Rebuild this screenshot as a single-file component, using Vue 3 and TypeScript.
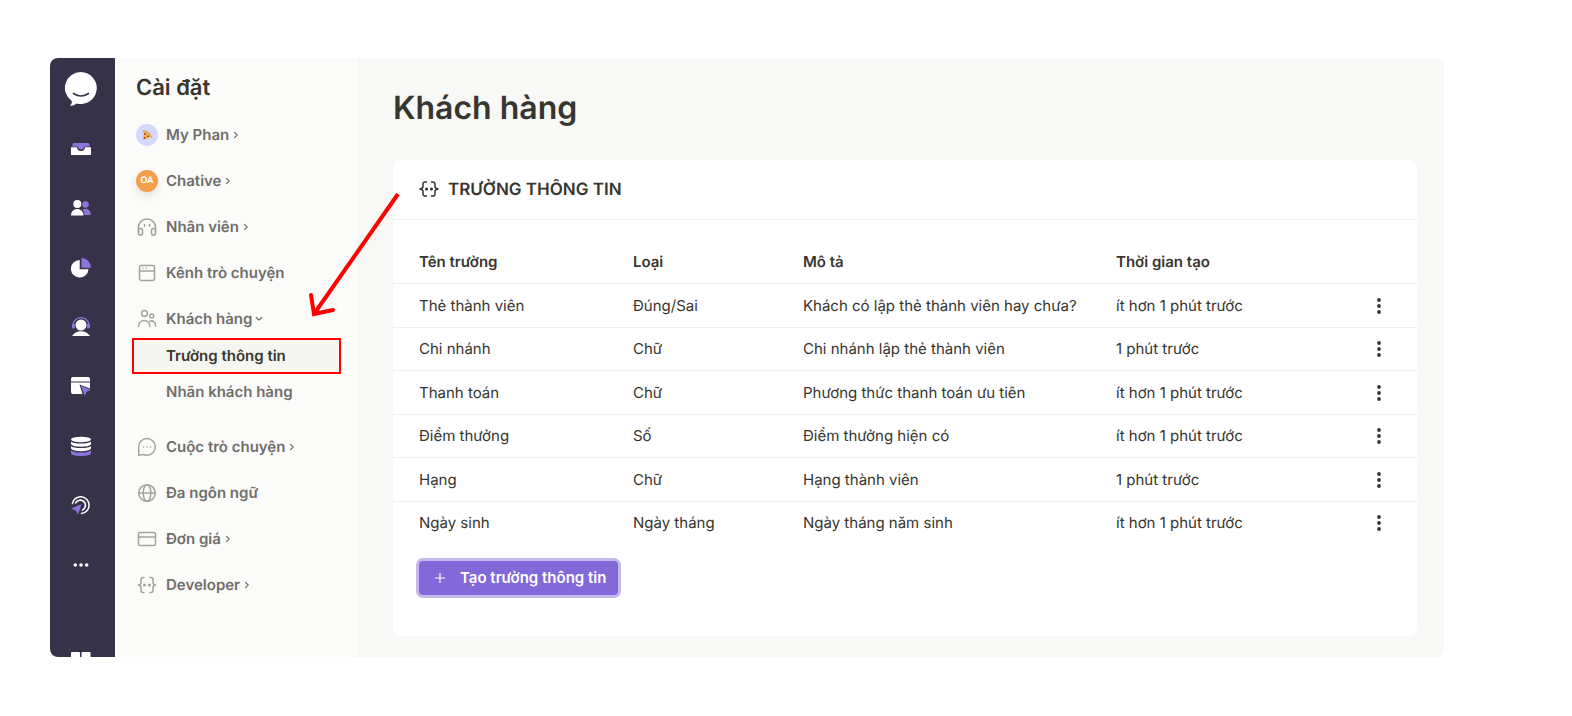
<script setup lang="ts">
import { ref } from 'vue'

interface NavItem {
  id: string
  label: string
  chevron?: 'right' | 'down'
  children?: string[]
}

interface Field {
  name: string
  type: string
  description: string
  created: string
}

const railItems: { id: string; label: string }[] = [
  { id: 'inbox', label: 'Hộp thư' },
  { id: 'contacts', label: 'Danh bạ' },
  { id: 'reports', label: 'Báo cáo' },
  { id: 'agents', label: 'Tổng đài' },
  { id: 'widget', label: 'Tiện ích' },
  { id: 'data', label: 'Dữ liệu' },
  { id: 'campaign', label: 'Chiến dịch' },
  { id: 'more', label: 'Thêm' },
  { id: 'apps', label: 'Ứng dụng' },
]

const navItems: NavItem[] = [
  { id: 'profile', label: 'My Phan', chevron: 'right' },
  { id: 'org', label: 'Chative', chevron: 'right' },
  { id: 'staff', label: 'Nhân viên', chevron: 'right' },
  { id: 'channel', label: 'Kênh trò chuyện' },
  {
    id: 'customer',
    label: 'Khách hàng',
    chevron: 'down',
    children: ['Trường thông tin', 'Nhãn khách hàng'],
  },
  { id: 'chat', label: 'Cuộc trò chuyện', chevron: 'right' },
  { id: 'language', label: 'Đa ngôn ngữ' },
  { id: 'billing', label: 'Đơn giá', chevron: 'right' },
  { id: 'developer', label: 'Developer', chevron: 'right' },
]

const activeChild = ref('Trường thông tin')

const fields: Field[] = [
  { name: 'Thẻ thành viên', type: 'Đúng/Sai', description: 'Khách có lập thẻ thành viên hay chưa?', created: 'ít hơn 1 phút trước' },
  { name: 'Chi nhánh', type: 'Chữ', description: 'Chi nhánh lập thẻ thành viên', created: '1 phút trước' },
  { name: 'Thanh toán', type: 'Chữ', description: 'Phương thức thanh toán ưu tiên', created: 'ít hơn 1 phút trước' },
  { name: 'Điểm thưởng', type: 'Số', description: 'Điểm thưởng hiện có', created: 'ít hơn 1 phút trước' },
  { name: 'Hạng', type: 'Chữ', description: 'Hạng thành viên', created: '1 phút trước' },
  { name: 'Ngày sinh', type: 'Ngày tháng', description: 'Ngày tháng năm sinh', created: 'ít hơn 1 phút trước' },
]
</script>

<template>
  <div class="page">
    <div class="app">
      <nav class="rail" aria-label="Chính">
        <a class="logo" href="#" aria-label="Trang chủ">
          <svg width="34" height="36" viewBox="0 0 34 36">
            <path d="M17 1a16 16 0 1 1-4.600 31.400C10.500 34 8.500 34.800 6 34.600C7.500 33.300 8 31.800 7.700 30.100A16 16 0 0 1 17 1z" fill="#fff" />
            <path d="M9.500 22.500Q17 27.500 24.500 22.500" fill="none" stroke="#36324a" stroke-width="1.700" stroke-linecap="round" />
          </svg>
        </a>
        <a v-for="item in railItems" :key="item.id" class="rail-item" href="#" :aria-label="item.label">
          <svg width="20" height="20" viewBox="0 0 20 20">
            <template v-if="item.id === 'inbox'">
              <path d="M3 4h14q1 0 1.300 1l.7 2.500H13.500Q13 10.500 10 10.500T6.500 7.500H1L1.700 5Q2 4 3 4z" fill="#8c74dc" />
              <path d="M0 8.300h6a4 3.600 0 0 0 8 0H20v7.200a.5.5 0 0 1-.5.5H.5a.5.5 0 0 1-.5-.5z" fill="#fff" />
            </template>
            <template v-else-if="item.id === 'contacts'">
              <circle cx="14.500" cy="6.500" r="3.300" fill="#8c74dc" />
              <path d="M11.500 11.500C16.500 9.600 19.700 12.200 19.700 17H13.500Q13.500 13.500 11.500 11.500z" fill="#8c74dc" />
              <circle cx="6.300" cy="6" r="4" fill="#fff" />
              <path d="M0 17.500C0 8.800 12.500 8.800 12.500 17.500z" fill="#fff" />
            </template>
            <template v-else-if="item.id === 'reports'">
              <path d="M8.700 2A8.800 8.800 0 1 0 17.500 11.300H8.700z" fill="#fff" />
              <path d="M10.500 0A9.300 9.300 0 0 1 19.800 9.700H10.500z" fill="#8c74dc" />
            </template>
            <template v-else-if="item.id === 'agents'">
              <path d="M2.200 7.500a7.800 6.800 0 0 1 15.600 0" fill="none" stroke="#8c74dc" stroke-width="1.300" />
              <rect x="1" y="6.500" width="3" height="5" rx="1.500" fill="#8c74dc" />
              <rect x="16" y="6.500" width="3" height="5" rx="1.500" fill="#8c74dc" />
              <circle cx="10" cy="8" r="5.500" fill="#fff" />
              <path d="M1 19Q4 14.300 10 14.300T19 19z" fill="#fff" />
            </template>
            <template v-else-if="item.id === 'widget'">
              <path d="M0 5.500V3a2 2 0 0 1 2-2h15a2 2 0 0 1 2 2v2.500z" fill="#fff" />
              <path d="M0 6.500h19v6L8.500 8.500l3 9.500H2a2 2 0 0 1-2-2z" fill="#fff" />
              <path d="M9.800 9.800l10 4.300-4.200 1.600L13.800 20z" fill="#8c74dc" />
            </template>
            <template v-else-if="item.id === 'data'">
              <path d="M0 14v3q0 3 10 3t10-3v-3q-2 2.600-10 2.600T0 14z" fill="#8c74dc" />
              <ellipse cx="10" cy="3.500" rx="10" ry="2.700" fill="#fff" />
              <path d="M0 5.500Q2 7.600 10 7.600T20 5.500V8.300Q18 10.800 10 10.800T0 8.300z" fill="#fff" />
              <path d="M0 10Q2 12 10 12T20 10V12.500Q18 15.200 10 15.200T0 12.500z" fill="#fff" />
            </template>
            <template v-else-if="item.id === 'campaign'">
              <path d="M1.400 8.600A8.400 8.400 0 1 1 10.500 18.500" fill="none" stroke="#fff" stroke-width="1.500" stroke-linecap="round" />
              <path d="M4.600 8A5.200 5.200 0 1 1 11.500 15" fill="none" stroke="#fff" stroke-width="1.600" stroke-linecap="round" />
              <path d="M10.500 9.300L7 19.500 4.700 15.500 0 13.500z" fill="#8c74dc" />
            </template>
            <template v-else-if="item.id === 'more'">
              <circle cx="4.300" cy="11" r="1.800" fill="#fff" />
              <circle cx="10" cy="11" r="1.800" fill="#fff" />
              <circle cx="15.700" cy="11" r="1.800" fill="#fff" />
            </template>
            <template v-else>
              <rect x="0" y="0" width="9" height="9" rx="1" fill="#fff" />
              <rect x="10.500" y="0" width="9" height="9" rx="1" fill="#fff" />
              <rect x="0" y="10.500" width="9" height="9" rx="1" fill="#fff" />
              <rect x="10.500" y="10.500" width="9" height="9" rx="1" fill="#fff" />
            </template>
          </svg>
        </a>
      </nav>

      <aside class="sidebar">
        <h2 class="sidebar-title">Cài đặt</h2>
        <ul class="nav">
          <li v-for="item in navItems" :key="item.id">
            <a class="nav-link" href="#">
              <span v-if="item.id === 'profile'" class="avatar avatar-pizza">
                <svg width="12" height="12" viewBox="0 0 12 12">
                  <path d="M2.500 2.500L10.500 8 2 11z" fill="#f5c04a" />
                  <path d="M2 1Q9 1.500 11.500 8.500L10 9Q7.500 4 1.700 3z" fill="#e5a65c" />
                  <circle cx="4" cy="5" r="1.100" fill="#c4372f" />
                  <circle cx="7" cy="7.200" r="1" fill="#c4372f" />
                  <circle cx="3.600" cy="9" r="1" fill="#c4372f" />
                </svg>
              </span>
              <span v-else-if="item.id === 'org'" class="avatar avatar-org">OA</span>
              <svg v-else class="nav-icon" width="22" height="22" viewBox="0 0 22 22">
                <template v-if="item.id === 'staff'">
                  <path d="M2.500 16V11a8.500 8 0 0 1 17 0V16" />
                  <rect x="2.500" y="12.500" width="4" height="6.500" rx="1.800" />
                  <rect x="15.500" y="12.500" width="4" height="6.500" rx="1.800" />
                  <path d="M8.500 8.500v1.800M13.500 8.500v1.800" />
                </template>
                <template v-else-if="item.id === 'channel'">
                  <rect x="3.500" y="3.500" width="15" height="15" rx="2" />
                  <path d="M3.500 9h15M6.800 6.300h.1M10.300 6.300h.1" />
                </template>
                <template v-else-if="item.id === 'customer'">
                  <circle cx="8.500" cy="5.500" r="2.900" />
                  <circle cx="15.700" cy="8" r="2" />
                  <path d="M2.800 18.500V17.500a5.500 5 0 0 1 11 0V18.500M14 13.200a4 4 0 0 1 5.500 4v1" />
                </template>
                <template v-else-if="item.id === 'chat'">
                  <path d="M2.700 19.200V11A8.300 8.300 0 1 1 11 19.200Q8.500 19.200 6.800 18.300Q5 19.200 2.700 19.200z" />
                  <path d="M7.500 11h.1M11 11h.1M14.500 11h.1" />
                </template>
                <template v-else-if="item.id === 'language'">
                  <circle cx="11" cy="11" r="8.300" />
                  <ellipse cx="11" cy="11" rx="3.800" ry="8.300" />
                  <path d="M2.700 11h16.600" />
                </template>
                <template v-else-if="item.id === 'billing'">
                  <rect x="2.500" y="4.500" width="17" height="13" rx="1.500" />
                  <path d="M2.500 9h17" />
                </template>
                <template v-else>
                  <path d="M8 3.500H7A2 2 0 0 0 5 5.500V8.500Q5 10.500 2.500 11Q5 11.500 5 13.500V16.500A2 2 0 0 0 7 18.500H8M14 3.500h1a2 2 0 0 1 2 2v3Q17 10.500 19.500 11Q17 11.500 17 13.500v3a2 2 0 0 1-2 2H14" />
                  <path class="thick" d="M8.500 11h.1M13.400 11h.1" />
                </template>
              </svg>
              <span>{{ item.label }}</span>
              <svg v-if="item.chevron" class="chevron" :class="item.chevron" width="8" height="8" viewBox="0 0 8 8">
                <path d="M2.500 1.300l2.700 2.700-2.700 2.700" />
              </svg>
            </a>
            <ul v-if="item.children" class="subnav">
              <li v-for="child in item.children" :key="child">
                <a class="sub-link" :class="{ active: child === activeChild }" href="#" @click.prevent="activeChild = child">{{ child }}</a>
              </li>
            </ul>
          </li>
        </ul>
      </aside>

      <main class="main">
        <h1 class="title">Khách hàng</h1>
        <section class="card">
          <header class="card-head">
            <svg class="head-icon" width="22" height="22" viewBox="0 0 22 22">
              <path d="M8.500 3H7.500A2 2 0 0 0 5 5V7.500Q5 9.500 2 10Q5 10.500 5 12.500V15A2 2 0 0 0 7.500 17H8.500M13.500 3h1a2 2 0 0 1 2.500 2v2.500Q17 9.500 20 10Q17 10.500 17 12.500V15a2 2 0 0 1-2.500 2H13.500" />
              <path class="thick" d="M8.500 10h.1M13.400 10h.1" />
            </svg>
            <h3>TRƯỜNG THÔNG TIN</h3>
          </header>
          <table class="fields">
            <thead>
              <tr>
                <th class="col-name">Tên trường</th>
                <th class="col-type">Loại</th>
                <th class="col-desc">Mô tả</th>
                <th>Thời gian tạo</th>
                <th class="col-menu"></th>
              </tr>
            </thead>
            <tbody>
              <tr v-for="field in fields" :key="field.name">
                <td>{{ field.name }}</td>
                <td>{{ field.type }}</td>
                <td>{{ field.description }}</td>
                <td>{{ field.created }}</td>
                <td>
                  <button class="menu" type="button" aria-label="Tùy chọn">
                    <svg width="6" height="18" viewBox="0 0 6 18">
                      <circle cx="3" cy="3" r="1.900" />
                      <circle cx="3" cy="9" r="1.900" />
                      <circle cx="3" cy="15" r="1.900" />
                    </svg>
                  </button>
                </td>
              </tr>
            </tbody>
          </table>
          <button class="create" type="button">
            <svg width="12" height="12" viewBox="0 0 12 12"><path d="M6 1v10M1 6h10" /></svg>
            Tạo trường thông tin
          </button>
        </section>
      </main>

      <svg class="arrow" width="96" height="132" viewBox="0 0 96 132" aria-hidden="true">
        <path d="M92 5L8 125" stroke-linecap="butt" />
        <path d="M5 106L8 125L27 121" stroke-linecap="round" />
      </svg>
    </div>
  </div>
</template>

<style>
body {
  margin: 0;
  background: #fff;
}
</style>

<style scoped>
.page {
  box-sizing: border-box;
  padding: 58px 128px 59px 50px;
  font-family: Inter, "Noto Sans", "Liberation Sans", sans-serif;
  font-size: 15px;
  line-height: 20px;
  color: #37352f;
  text-rendering: geometricPrecision;
}

.app {
  position: relative;
  display: flex;
  border-radius: 8px;
  overflow: hidden;
  background: #f8f8f6;
}

a {
  color: inherit;
  text-decoration: none;
}

ul {
  list-style: none;
  margin: 0;
  padding: 0;
}

h1,
h2,
h3 {
  margin: 0;
  font-weight: 600;
}

.rail {
  box-sizing: border-box;
  flex: none;
  width: 65px;
  margin-bottom: -20px;
  padding: 13px 3px 0 0;
  display: flex;
  flex-direction: column;
  align-items: center;
  gap: 39px;
  background: #36324a;
}

.logo {
  height: 36px;
  margin-bottom: -7px;
}

.logo svg,
.rail-item svg {
  display: block;
}

.rail-item {
  height: 20px;
}

.rail-item:nth-of-type(3n) {
  margin-bottom: 1px;
}

.rail-item:last-child {
  margin-top: 38px;
}

.sidebar {
  box-sizing: border-box;
  flex: none;
  width: 244px;
  padding: 14px 19px 0;
  border-right: 1px solid #f1f1ef;
  background: #fbfbfa;
}

.sidebar-title {
  padding-left: 2px;
  font-size: 22px;
  line-height: 32px;
  margin-bottom: 8px;
}

.nav-link {
  display: flex;
  align-items: center;
  height: 46px;
  padding-left: 2px;
  font-weight: 600;
  color: #6f6e6a;
}

.avatar,
.nav-icon {
  flex: none;
  width: 22px;
  height: 22px;
  margin-right: 8px;
}

.avatar {
  display: flex;
  align-items: center;
  justify-content: center;
  border-radius: 50%;
}

.avatar-pizza {
  background: #d5d8fc;
}

.avatar-org {
  background: #f2a04a;
  box-shadow: 0 4px 10px rgba(0, 0, 0, 0.1);
  color: #fff;
  font-size: 9px;
}

.nav-icon,
.head-icon,
.chevron {
  fill: none;
  stroke: #a3a29e;
  stroke-width: 1.500;
  stroke-linecap: round;
  stroke-linejoin: round;
}

.thick {
  stroke-width: 3;
}

.chevron {
  margin-left: 3px;
  stroke: #6f6e6a;
  stroke-width: 1.200;
}

.chevron.down {
  transform: rotate(90deg);
}

.subnav {
  margin: -2px 0 16px;
}

.sub-link {
  display: flex;
  align-items: center;
  height: 32px;
  margin-bottom: 4px;
  padding-left: 32px;
  font-weight: 600;
  color: #6f6e6a;
}

.sub-link.active {
  background: #f5f5f1;
  outline: 2px solid #f00;
  color: #37352f;
}

.main {
  flex: 1;
  min-width: 0;
  padding: 30px 27px 21px 34px;
}

.title {
  font-size: 32px;
  line-height: 40px;
  margin-bottom: 32px;
}

.card {
  border-radius: 8px;
  background: #fff;
  padding-bottom: 41px;
}

.card-head {
  display: flex;
  align-items: center;
  gap: 8px;
  height: 59px;
  padding-left: 25px;
  border-bottom: 1px solid #f1f1ef;
}

.card-head h3 {
  font-size: 17px;
}

.head-icon {
  stroke: #37352f;
}

.fields {
  width: 100%;
  margin-top: 21px;
  border-collapse: collapse;
  table-layout: fixed;
}

.fields th,
.fields td {
  height: 43px;
  padding: 0;
  text-align: left;
  border-bottom: 1px solid #efefec;
}

.fields tr:nth-child(even) td {
  height: 42px;
}

.fields tr:last-child td {
  border-bottom: 0;
}

.fields th {
  height: 42px;
  font-weight: 600;
}

.fields th:first-child,
.fields td:first-child {
  padding-left: 26px;
}

.col-name {
  width: 214px;
}

.col-type {
  width: 170px;
}

.col-desc {
  width: 313px;
}

.col-menu {
  width: 77px;
}

.menu {
  display: block;
  margin: 0 auto;
  padding: 0 8px;
  border: 0;
  background: none;
  cursor: pointer;
}

.menu svg {
  display: block;
  fill: #37352f;
}

.create {
  display: flex;
  align-items: center;
  gap: 14px;
  height: 34px;
  margin: 17px 0 0 26px;
  padding: 0 12px 0 15px;
  border: 0;
  border-radius: 4px;
  background: #8268d8;
  box-shadow: 0 0 0 3px #c4b8ec;
  color: #fff;
  font: inherit;
  font-weight: 600;
  cursor: pointer;
}

.create svg {
  stroke: #fff;
  stroke-width: 1.200;
}

.arrow {
  position: absolute;
  left: 256px;
  top: 131px;
  fill: none;
  stroke: #f00;
  stroke-width: 4;
  stroke-linejoin: miter;
  pointer-events: none;
}
</style>
